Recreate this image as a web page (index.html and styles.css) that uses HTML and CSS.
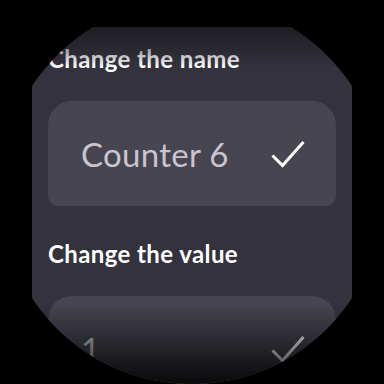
FILE: index.html
```html
<!DOCTYPE html>
<html>
<head>
<meta charset="utf-8">
<link rel="stylesheet" href="styles.css">
</head>
<body>
<div class="watch">
  <div class="column">
    <h2 class="label">Change the name</h2>
    <div class="field">
      <span class="value">Counter 6</span>
      <svg class="check" width="34" height="30" viewBox="0 0 34 30"><polyline points="1.5,16.5 11.5,26.5 32.5,3" fill="none" stroke="#ffffff" stroke-width="3"/></svg>
    </div>
    <h2 class="label label-second">Change the value</h2>
    <div class="field">
      <span class="value">1</span>
      <svg class="check" width="34" height="30" viewBox="0 0 34 30"><polyline points="1.5,16.5 11.5,26.5 32.5,3" fill="none" stroke="#ffffff" stroke-width="3"/></svg>
    </div>
  </div>
</div>
</body>
</html>
```

FILE: styles.css
```css
html, body {
  margin: 0;
  padding: 0;
  background: #000;
}
.watch {
  width: 384px;
  height: 384px;
  border-radius: 50%;
  overflow: hidden;
  background: #000;
  position: relative;
}
.column {
  position: relative;
  margin: 27px 0 0 32px;
  width: 320px;
  height: 357px;
  background: #33323d;
  padding: 16px 16px 0 16px;
  box-sizing: border-box;
  overflow: hidden;
}
.column::before {
  content: "";
  position: absolute;
  left: 0;
  top: 0;
  width: 100%;
  height: 40px;
  background: linear-gradient(#1e1d24, rgba(51,50,61,0));
  z-index: 2;
}
.column::after {
  content: "";
  position: absolute;
  left: 0;
  bottom: 0;
  width: 100%;
  height: 80px;
  background: linear-gradient(rgba(0,0,0,0), rgba(0,0,0,0.88));
  z-index: 2;
}
.label {
  margin: 0;
  font-family: "Lato", "Inter", sans-serif;
  font-weight: 700;
  font-size: 24px;
  line-height: 32px;
  color: #ffffff;
  letter-spacing: 0.4px;
}
.label-second {
  margin-top: 32px;
}
.field {
  margin-top: 26px;
  height: 105px;
  background: #464550;
  border-radius: 24px 24px 10px 10px;
  display: flex;
  align-items: center;
  justify-content: space-between;
  padding: 0 31px 0 33px;
  flex-shrink: 0;
}
.value {
  font-family: "Lato", "Inter", sans-serif;
  font-weight: 400;
  font-size: 33px;
  color: #c9c4d0;
  letter-spacing: 0.3px;
}
.check {
  display: block;
}
```
